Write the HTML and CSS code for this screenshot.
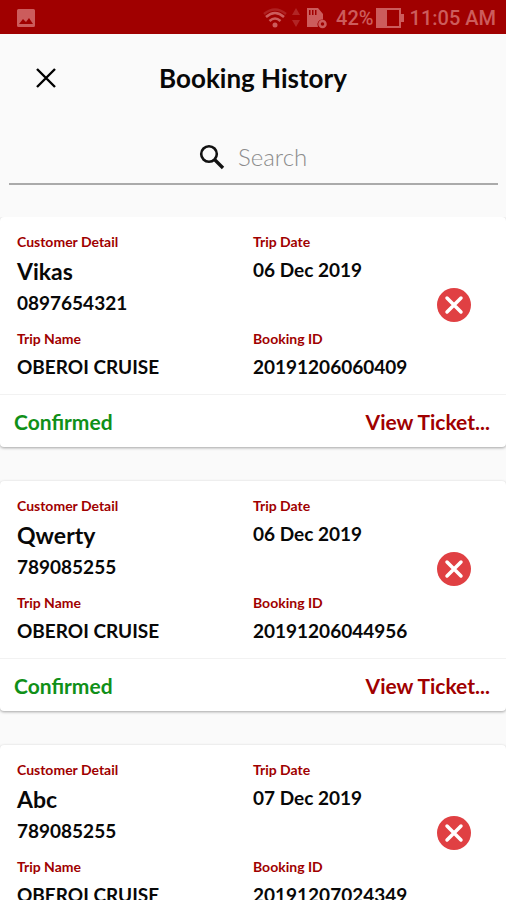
FILE: index.html
```html
<!DOCTYPE html>
<html lang="en">
<head>
<meta charset="utf-8">
<meta name="viewport" content="width=device-width, initial-scale=1">
<title>Booking History</title>
<link rel="stylesheet" href="styles.css">
</head>
<body>
<svg class="sprite" aria-hidden="true">
  <symbol id="cancel" viewBox="0 0 34 34">
    <circle cx="17" cy="17" r="17" fill="#e04043"/>
    <path d="M10 10 24 24M24 10 10 24" stroke="#fff" stroke-width="3.500" stroke-linecap="round"/>
  </symbol>
</svg>
<div class="status">
  <svg class="photo" viewBox="0 0 20 20" width="20" height="20"><path fill-rule="evenodd" d="M2.500 1h15A1.500 1.500 0 0 1 19 2.500v15a1.500 1.500 0 0 1-1.500 1.500h-15A1.500 1.500 0 0 1 1 17.500v-15A1.500 1.500 0 0 1 2.500 1zM3 16h14l-4-6-3 4-3-3z"/></svg>
  <div class="indicators">
    <svg class="wifi" viewBox="0 0 24 22" width="24" height="22" fill="none" stroke-width="2.500"><path opacity=".35" d="M1 7Q12-2 23 7"/><path d="M3 10Q12 2 21 10M6.500 14Q12 9 17.500 14"/><circle cx="12" cy="18" r="2.500"/></svg>
    <svg class="traffic" viewBox="0 0 10 22" width="10" height="22"><path d="M5 1 9 8H1zM1 13h8l-4 7z"/></svg>
    <svg class="sdcard" viewBox="0 0 22 22" width="22" height="22"><path fill-rule="evenodd" d="M1 1h11l5 6v5.500a5 5 0 0 0-5 7.500H1zM3 3v5h1.500V3zM6 3v5h1.500V3zM9 3v5h1.500V3z"/><circle cx="16.500" cy="17" r="3" fill="none" stroke-width="2.500"/></svg>
    <span class="percent">42%</span>
    <svg class="battery" viewBox="0 0 28 20" width="28" height="20"><path fill-rule="evenodd" d="M0 0h25v6h3v8h-3v6H0zM11 2v16h12V2z"/></svg>
    <span class="clock">11:05 AM</span>
  </div>
</div>
<header class="header">
  <button class="close" type="button" aria-label="Close"><svg viewBox="0 0 20 20" width="20" height="20"><path d="M1 1 19 19M19 1 1 19" stroke="#000" stroke-width="2.400"/></svg></button>
  <h1>Booking History</h1>
</header>
<div class="search">
  <label for="q" aria-label="Search"><svg viewBox="0 0 26 26" width="26" height="26" fill="none" stroke="#111"><circle cx="10" cy="10" r="7.800" stroke-width="2.600"/><path d="M15.500 15.500 24 24" stroke-width="3.400"/></svg></label>
  <input id="q" type="text" placeholder="Search">
</div>
<main class="list">
  <article class="card">
    <div class="details">
      <div><h2>Customer Detail</h2><p class="name">Vikas</p><p>0897654321</p></div>
      <div><h2>Trip Date</h2><p>06 Dec 2019</p></div>
      <button class="cancel" type="button" aria-label="Cancel booking"><svg width="34" height="34"><use href="#cancel"/></svg></button>
      <div><h2>Trip Name</h2><p>OBEROI CRUISE</p></div>
      <div><h2>Booking ID</h2><p>20191206060409</p></div>
    </div>
    <footer><span class="state">Confirmed</span><a href="#">View Ticket...</a></footer>
  </article>
  <article class="card">
    <div class="details">
      <div><h2>Customer Detail</h2><p class="name">Qwerty</p><p>789085255</p></div>
      <div><h2>Trip Date</h2><p>06 Dec 2019</p></div>
      <button class="cancel" type="button" aria-label="Cancel booking"><svg width="34" height="34"><use href="#cancel"/></svg></button>
      <div><h2>Trip Name</h2><p>OBEROI CRUISE</p></div>
      <div><h2>Booking ID</h2><p>20191206044956</p></div>
    </div>
    <footer><span class="state">Confirmed</span><a href="#">View Ticket...</a></footer>
  </article>
  <article class="card">
    <div class="details">
      <div><h2>Customer Detail</h2><p class="name">Abc</p><p>789085255</p></div>
      <div><h2>Trip Date</h2><p>07 Dec 2019</p></div>
      <button class="cancel" type="button" aria-label="Cancel booking"><svg width="34" height="34"><use href="#cancel"/></svg></button>
      <div><h2>Trip Name</h2><p>OBEROI CRUISE</p></div>
      <div><h2>Booking ID</h2><p>20191207024349</p></div>
    </div>
  </article>
</main>
</body>
</html>
```
FILE: styles.css
```css
* { box-sizing: border-box; margin: 0; padding: 0; }
body {
  display: flex;
  flex-direction: column;
  height: 100vh;
  overflow: hidden;
  background: #fafafa;
  color: #080808;
  font-family: Lato, "Liberation Sans", sans-serif;
}
svg { display: block; }
.sprite { position: absolute; width: 0; height: 0; }
button { border: 0; background: none; cursor: pointer; }

.status {
  flex: none;
  display: flex;
  align-items: center;
  justify-content: space-between;
  height: 34px;
  padding: 1px 10px 0 16px;
  background: #a00000;
  color: #cc5c5c;
  font: 500 20px/32px Roboto, sans-serif;
}
.status svg { fill: currentColor; stroke: none; }
.status .wifi path { fill: none; stroke: currentColor; }
.status .sdcard circle { fill: none; stroke: currentColor; }
.status .traffic { opacity: .4; }
.indicators { display: flex; align-items: center; }
.traffic { margin: 0 5px 0 4px; }
.sdcard { margin-right: 8px; }
.battery { margin: 0 6px 0 2px; }

.header {
  flex: none;
  display: grid;
  grid-template-columns: 58px 1fr 58px;
  align-items: center;
  height: 88px;
}
.close { justify-self: end; padding: 2px; }
.header h1 { font-size: 26px; line-height: 32px; text-align: center; }

.search {
  flex: none;
  display: flex;
  align-items: center;
  justify-content: center;
  gap: 13px;
  height: 63px;
  margin: 0 8px 32px 9px;
  padding-top: 8px;
  border-bottom: 2px solid #aaa;
}
.search input {
  width: 70px;
  border: 0;
  outline: 0;
  background: none;
  color: #111;
  font: 300 24px/32px Lato, sans-serif;
  field-sizing: content;
}
.search input::placeholder { color: #8c8c8c; }

.list {
  flex: 1;
  display: flex;
  flex-direction: column;
  gap: 34px;
  min-height: 0;
  overflow-y: auto;
  scrollbar-width: none;
}
.card {
  flex: none;
  border-radius: 4px;
  background: #fff;
  box-shadow: 0 1px 3px rgba(0, 0, 0, .35);
}
.details {
  display: grid;
  grid-template-columns: 50% 1fr auto;
  row-gap: 16px;
  padding: 17px 0 15px;
}
.details div:nth-of-type(odd) { padding-left: 17px; }
h2 { margin-bottom: 8px; color: #a00000; font-size: 14px; line-height: 16px; }
p { font-size: 19px; font-weight: 700; line-height: 24px; }
.name { margin-bottom: 7px; font-size: 23px; line-height: 26px; }
.cancel { grid-column: 3; grid-row: 1 / 3; align-self: center; margin: 0 35px 4px 0; }
.card footer {
  display: flex;
  align-items: center;
  justify-content: space-between;
  height: 53px;
  padding: 0 16px 0 14px;
  border-top: 1px solid #f2f2f2;
  font-size: 21px;
  font-weight: 700;
}
.state { color: #109018; }
.card a { color: #a00000; text-decoration: none; }
```
